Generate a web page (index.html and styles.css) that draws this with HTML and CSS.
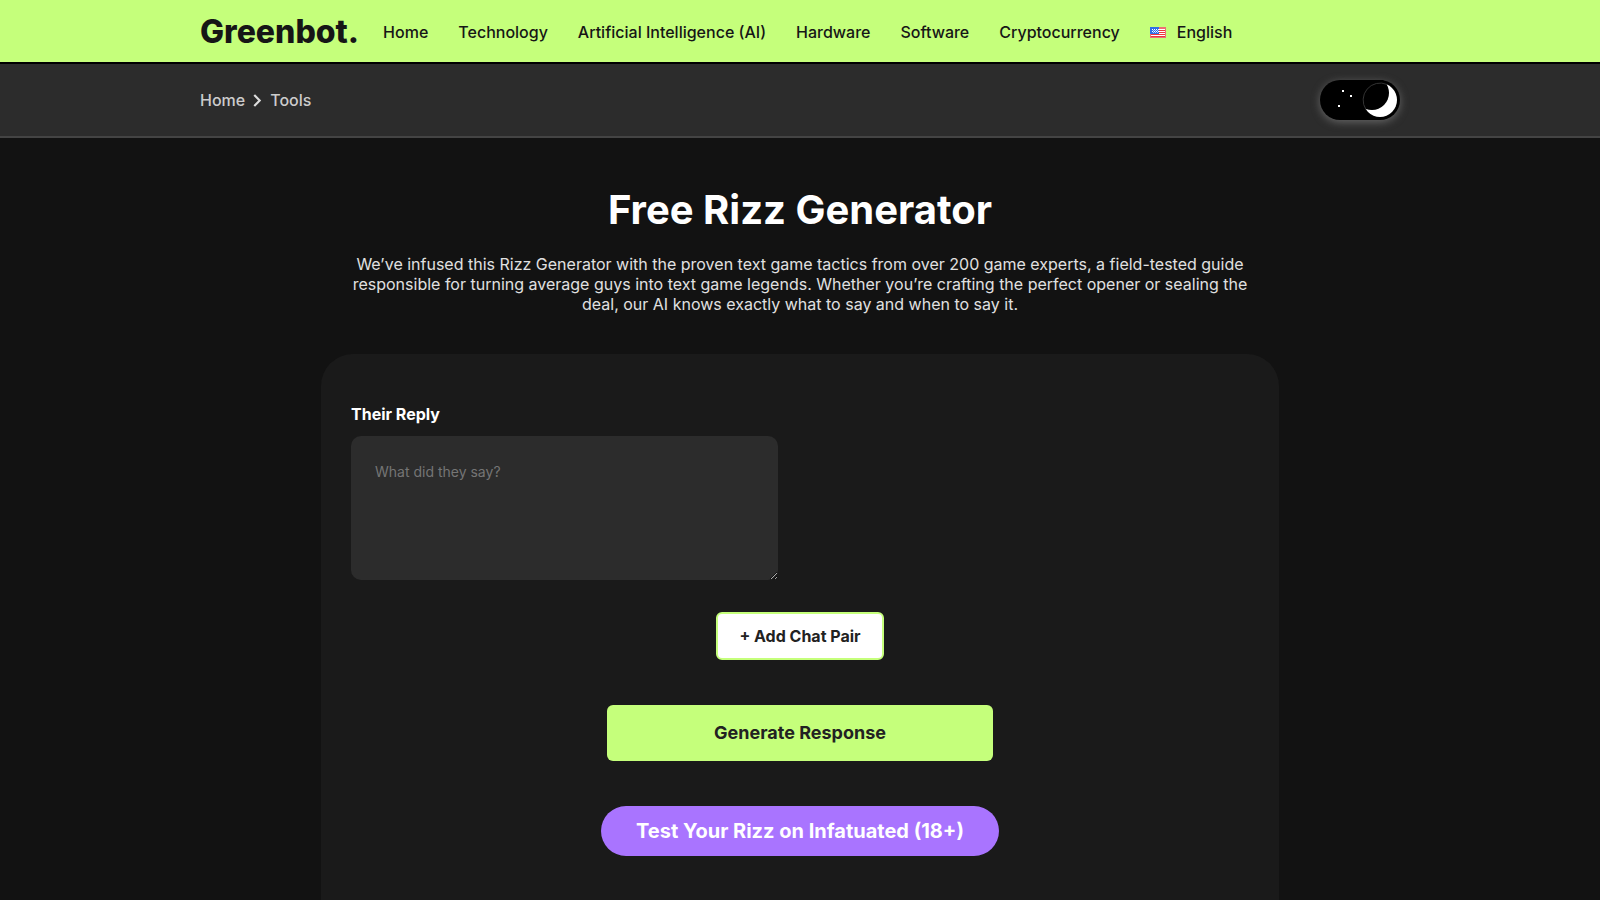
FILE: index.html
```html
<!DOCTYPE html>
<html lang="en">
<head>
<meta charset="utf-8">
<meta name="viewport" content="width=device-width, initial-scale=1">
<title>Free Rizz Generator - Greenbot</title>
<link rel="stylesheet" href="styles.css">
</head>
<body>
<header class="site-header">
  <div class="container header-row">
    <a class="logo" href="#">Greenbot.</a>
    <nav class="main-nav" aria-label="Main">
      <a href="#">Home</a>
      <a href="#">Technology</a>
      <a href="#">Artificial Intelligence (AI)</a>
      <a href="#">Hardware</a>
      <a href="#">Software</a>
      <a href="#">Cryptocurrency</a>
      <a class="language" href="#">
        <svg class="flag" viewBox="0 0 16 11" aria-hidden="true" shape-rendering="crispEdges">
          <rect width="16" height="11" fill="#f6a4a4"/>
          <path d="M1 2h14M1 4h14M1 6h14M1 8h14" stroke="#fff" transform="translate(0 .5)"/>
          <path d="M1 3h14M1 5h14M1 7h14M1 9h14" stroke="#f0333b" transform="translate(0 .5)"/>
          <path d="M1 1h14" stroke="#f46b70" transform="translate(0 .5)"/>
          <path d="M0 .5h16M0 10.5h16M.5 0v11M15.500 0v11" stroke="#ea7076"/>
          <rect width="9" height="7" fill="#2f6fe8"/>
          <path d="M2 2.500h7M2 4.500h7" stroke="#fff" stroke-dasharray="1 1"/>
          <path d="M3 3.500h6M3 5.500h6" stroke="#b9d2ff" stroke-dasharray="1 1"/>
        </svg>
        <span>English</span>
      </a>
    </nav>
  </div>
</header>
<div class="subheader">
  <div class="container subheader-row">
    <nav class="breadcrumb" aria-label="Breadcrumb">
      <a href="#">Home</a>
      <svg class="chevron" viewBox="0 0 8 12" aria-hidden="true"><path d="M1 1 6 6 1 11"/></svg>
      <a href="#">Tools</a>
    </nav>
    <label class="theme-switch">
      <input type="checkbox" checked aria-label="Dark mode">
      <svg viewBox="0 0 80 40" aria-hidden="true">
        <path d="M22 11h2M30 16h2M18 26h2" stroke="#fff" stroke-width="2"/>
        <circle cx="60" cy="20" r="17" fill="#fff"/>
        <circle cx="52" cy="13" r="17" fill="#000"/>
        <path d="M46 29.500A17 17 0 0 1 67 4.500" fill="none" stroke="#333"/>
      </svg>
    </label>
  </div>
</div>
<main class="tool">
  <h1>Free Rizz Generator</h1>
  <p class="intro">We’ve infused this Rizz Generator with the proven text game tactics from over 200 game experts, a field-tested guide responsible for turning average guys into text game legends. Whether you’re crafting the perfect opener or sealing the deal, our AI knows exactly what to say and when to say it.</p>
  <form class="card">
    <div class="field">
      <label for="reply">Their Reply</label>
      <textarea id="reply" placeholder="What did they say?"></textarea>
    </div>
    <button class="add-pair" type="button">+ Add Chat Pair</button>
    <button class="generate" type="button">Generate Response</button>
    <a class="promo" href="#">Test Your Rizz on Infatuated (18+)</a>
  </form>
</main>
</body>
</html>
```
FILE: styles.css
```css
* { box-sizing: border-box; }
body {
  margin: 0;
  background: #121212;
  color: #e0e0e0;
  font: 16px/20px Inter, sans-serif;
}
a { color: inherit; text-decoration: none; }
.container {
  max-width: 1240px;
  margin: 0 auto;
  padding: 0 20px;
}
.site-header {
  background: #c5ff7b;
  border-bottom: 2px solid #000;
  color: #161616;
}
.header-row {
  display: flex;
  align-items: center;
  gap: 24px;
  min-height: 62px;
  padding-top: 2px;
}
.logo {
  font-size: 32px;
  line-height: 40px;
  font-weight: 800;
}
.main-nav {
  display: flex;
  align-items: center;
  gap: 30px;
  font-weight: 500;
  white-space: nowrap;
}
.language { display: flex; align-items: center; gap: 11px; }
.flag { width: 16px; height: 11px; }
.subheader {
  background: #2c2c2c;
  border-bottom: 2px solid #444;
}
.subheader-row {
  display: flex;
  align-items: center;
  justify-content: space-between;
  min-height: 72px;
}
.breadcrumb {
  display: flex;
  align-items: center;
  gap: 8px;
  color: #ccc;
  font-weight: 500;
}
.chevron {
  width: 9px;
  height: 13px;
  fill: none;
  stroke: #ddd;
  stroke-width: 2;
}
.theme-switch {
  width: 80px;
  height: 40px;
  border-radius: 20px;
  background: #000;
  box-shadow: 0 2px 8px #666;
  cursor: pointer;
}
.theme-switch input { position: absolute; opacity: 0; }
.theme-switch svg { display: block; }
.tool {
  max-width: 998px;
  margin: 0 auto;
  padding: 47px 20px 0;
}
h1 {
  margin: 0 0 19px;
  color: #fff;
  font-size: 40px;
  line-height: 50px;
  text-align: center;
}
.intro {
  margin: 0 0 40px;
  padding: 0 20px;
  text-align: center;
}
.card {
  display: flex;
  flex-direction: column;
  align-items: center;
  padding: 50px 30px 44px;
  border-radius: 32px 32px 0 0;
  background: #1a1a1a;
}
.field {
  display: flex;
  flex-direction: column;
  align-self: flex-start;
  gap: 12px;
  width: 100%;
  max-width: 427px;
}
.field label { color: #fff; font-weight: 700; }
textarea {
  width: 100%;
  height: 144px;
  padding: 24px;
  border: 0;
  border-radius: 10px;
  background: #2c2c2c;
  color: #fff;
  font: 14px/24px Inter, sans-serif;
}
textarea::placeholder { color: #757575; }
.add-pair {
  height: 48px;
  margin-top: 32px;
  padding: 0 21px;
  border: 2px solid #c5ff7b;
  border-radius: 6px;
  background: #fff;
  color: #222;
  font: 700 16px/20px Inter, sans-serif;
}
.generate {
  width: 100%;
  max-width: 386px;
  height: 56px;
  margin-top: 45px;
  border: 0;
  border-radius: 6px;
  background: #c5ff7b;
  color: #222;
  font: 700 18px/24px Inter, sans-serif;
}
.promo {
  margin-top: 45px;
  padding: 13px 35px;
  border-radius: 25px;
  background: #a974ff;
  color: #fff;
  font-size: 20px;
  line-height: 24px;
  font-weight: 700;
}
```
